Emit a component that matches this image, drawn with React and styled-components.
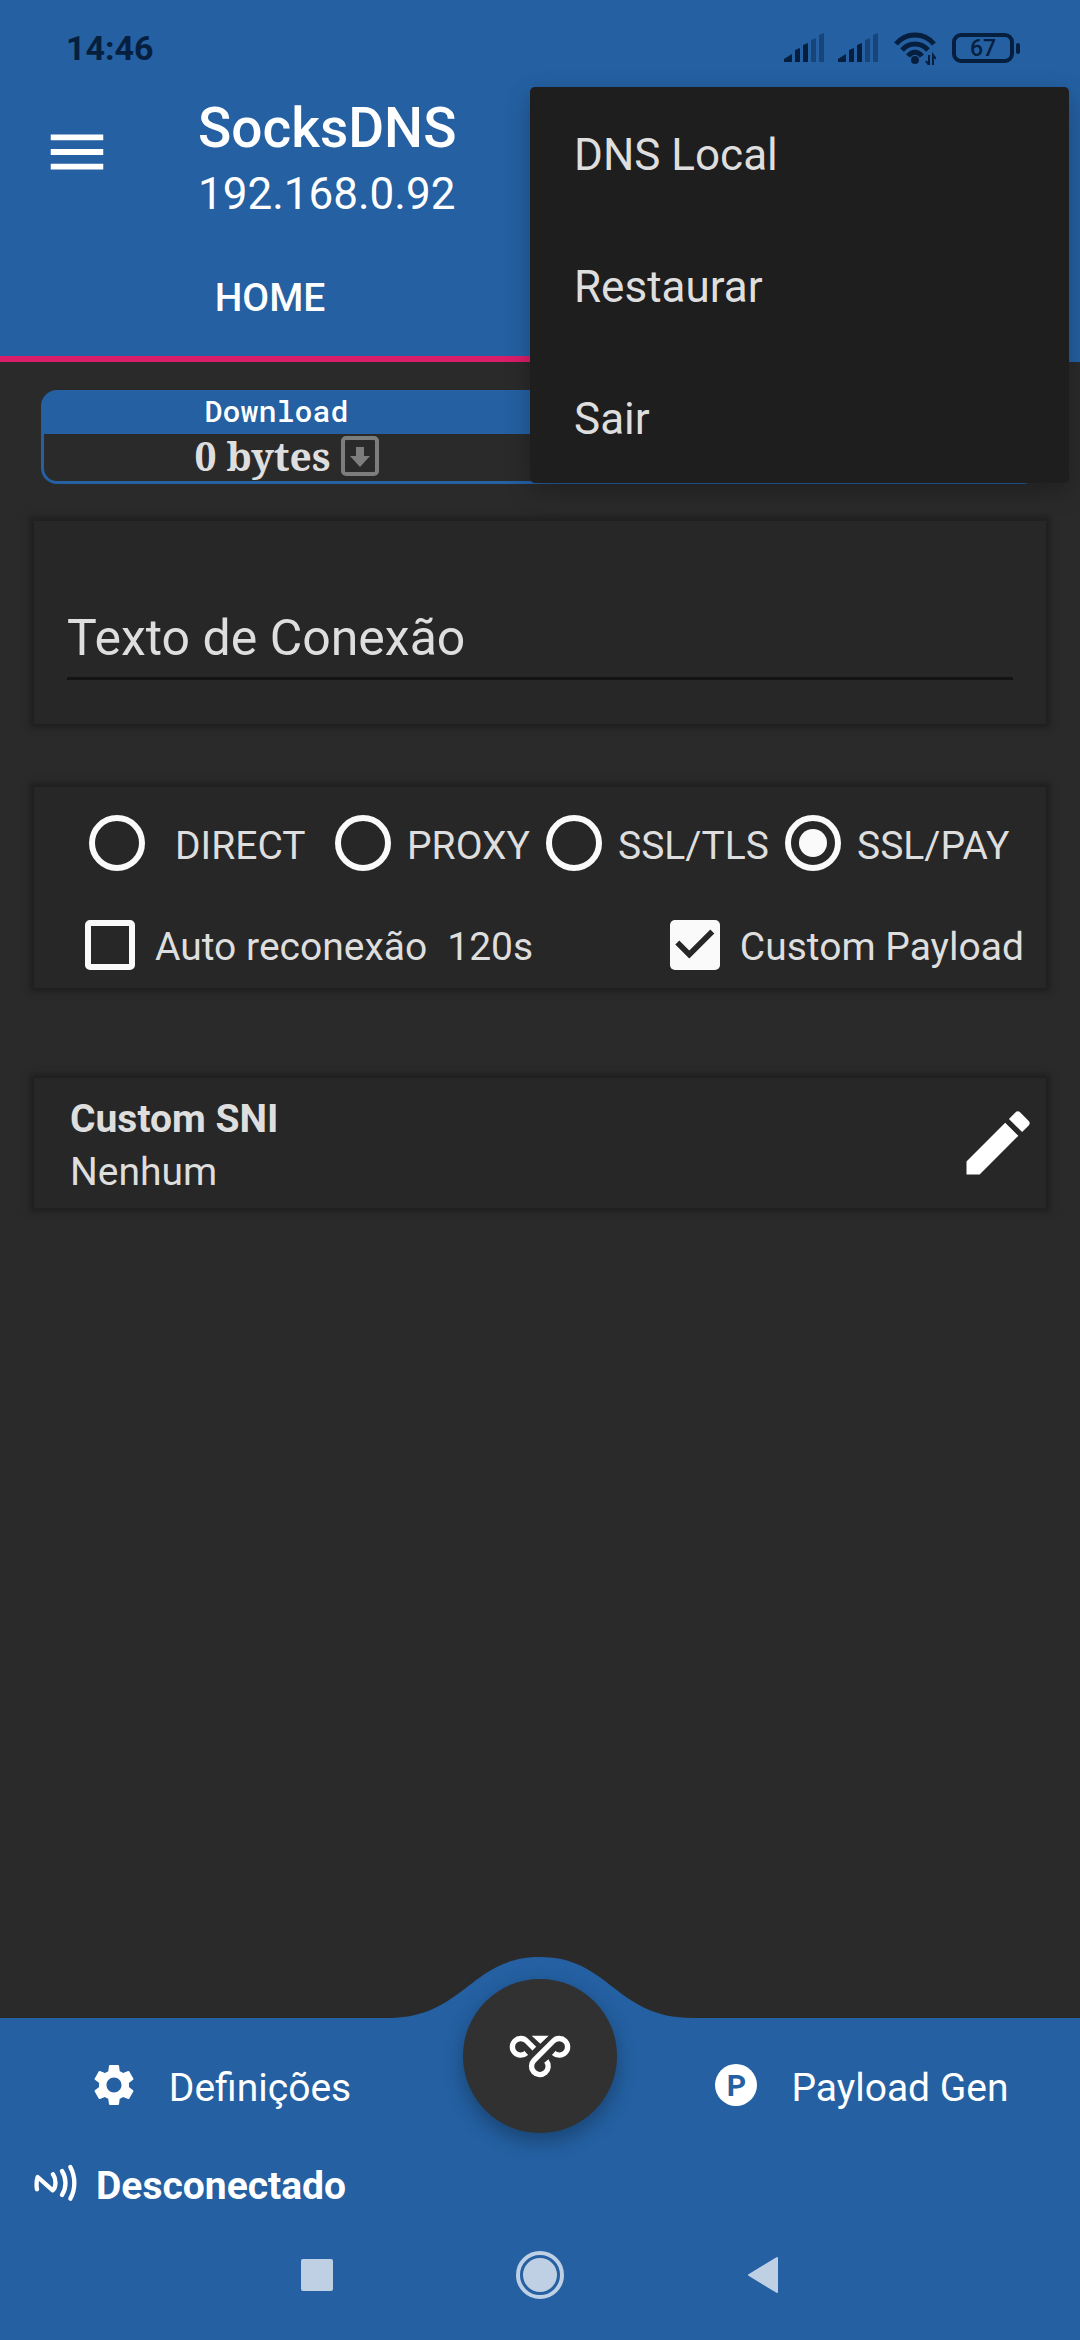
import React, { useState } from "react";
import styled, { createGlobalStyle } from "styled-components";
import { MdEdit, MdMenu, MdSettings } from "react-icons/md";

const GlobalStyle = createGlobalStyle`
  * {
    box-sizing: border-box;
  }
  body {
    margin: 0;
    background-color: #2a2a2a;
    font-family: Roboto, "Liberation Sans", sans-serif;
    font-size: 39px;
    color: #dedede;
  }
  button, input {
    font: inherit;
    color: inherit;
    margin: 0;
    padding: 0;
    border: none;
    background: none;
  }
`;

const Screen = styled.div`
  position: relative;
  min-height: 100vh;
  display: flex;
  flex-direction: column;
`;

// header
const Header = styled.header`
  background-color: #2460a2;
  color: #ffffff;
`;
const StatusBar = styled.div`
  height: 87px;
  padding: 9px 60px 0 66px;
  display: flex;
  align-items: center;
  justify-content: space-between;
  color: #061f3f;
`;
const Clock = styled.span`
  font-size: 34px;
  font-weight: 700;
`;
const StatusIcons = styled.div`
  display: flex;
  align-items: center;
  gap: 14px;
`;
const Battery = styled.div`
  width: 62px;
  height: 30px;
  margin: 0 6px 0 2px;
  display: flex;
  align-items: center;
  justify-content: center;
  border: 4px solid #061f3f;
  border-radius: 9px;
  font-size: 23px;
  font-weight: 500;
  position: relative;

  &::after {
    content: "";
    position: absolute;
    right: -10px;
    width: 4px;
    height: 11px;
    border-radius: 2px;
    background-color: #061f3f;
  }
`;
const Toolbar = styled.div`
  height: 145px;
  padding-left: 42px;
  display: flex;
  align-items: flex-start;
`;
const MenuButton = styled.button`
  width: 156px;
  height: 130px;
  display: flex;
  align-items: center;
`;
const Title = styled.h1`
  margin: 8px 0 0;
  font-size: 55px;
  line-height: 66px;
  font-weight: 500;
`;
const Subtitle = styled.div`
  font-size: 44px;
  line-height: 66px;
`;
const Tabs = styled.div`
  display: grid;
  grid-template-columns: 1fr 1fr;
`;
const Tab = styled.button`
  height: 130px;
  padding-top: 8px;
  font-weight: 500;
  border-bottom: 6px solid #d91d69;
`;

// overflow menu
const Menu = styled.div`
  position: absolute;
  top: 87px;
  right: 11px;
  width: calc(50% - 1px);
  border-radius: 5px;
  background-color: #1e1e1e;
  box-shadow: 0 8px 24px rgba(0, 0, 0, 0.25);
  z-index: 2;
`;
const MenuItem = styled.button`
  display: block;
  width: 100%;
  height: 132px;
  padding: 4px 0 0 44px;
  text-align: left;
  font-size: 44px;
`;

// content
const Main = styled.main`
  flex: 1;
  padding: 28px 34px 0;
`;
const Traffic = styled.section`
  height: 94px;
  margin: 0 7px;
  border: 3px solid #2460a2;
  border-top-width: 0;
  border-radius: 16px;
`;
const TrafficHead = styled.div`
  height: 44px;
  padding-bottom: 4px;
  display: grid;
  grid-template-columns: 465fr 527fr;
  align-items: center;
  text-align: center;
  border-radius: 13px 13px 0 0;
  background-color: #2460a2;
  color: #ffffff;
  font-family: "Roboto Mono", "Noto Sans Mono", "DejaVu Sans Mono", monospace;
  font-size: 30px;
  font-weight: 500;
`;
const TrafficBody = styled.div`
  height: 47px;
  display: grid;
  grid-template-columns: 465fr 527fr;
`;
const TrafficValue = styled.div`
  height: 47px;
  padding: 0 0 4px 20px;
  display: flex;
  align-items: center;
  justify-content: center;
  gap: 10px;
  font-family: "Noto Serif", "DejaVu Serif Condensed", "DejaVu Serif", serif;
  font-weight: 700;
  line-height: 44px;
`;
const Card = styled.section`
  margin-top: ${(props) => props.$top}px;
  background-color: #272727;
  box-shadow: 0 0 6px 4px #1f1f1f;
`;
const ConnectionCard = styled(Card)`
  padding: 77px 33px 44px;
`;
const ConnectionInput = styled.input`
  display: block;
  width: 100%;
  height: 82px;
  font-size: 50px;
  border-bottom: 3px solid #141414;
  outline: none;

  &::placeholder {
    color: #dedede;
    opacity: 1;
  }
`;
const ModeCard = styled(Card)`
  padding: 28px 22px 18px 51px;
`;
const RadioRow = styled.div`
  display: grid;
  grid-template-columns: 246fr 211fr 239fr 226fr;
  padding: 0 13px 0 4px;
`;
const CheckRow = styled.div`
  margin-top: 48px;
  display: flex;
  justify-content: space-between;
`;
const Option = styled.label`
  display: flex;
  align-items: center;
  gap: ${(props) => props.$gap || 20}px;
  white-space: nowrap;
`;
const LabelText = styled.span`
  padding-top: 5px;
`;
const Radio = styled.input`
  appearance: none;
  width: 56px;
  height: 56px;
  display: grid;
  place-items: center;
  border: 6px solid #fafafa;
  border-radius: 50%;

  &:checked::after {
    content: "";
    width: 28px;
    height: 28px;
    border-radius: 50%;
    background-color: #fafafa;
  }
`;
const Check = styled.input`
  appearance: none;
  width: 50px;
  height: 50px;
  border: 6px solid #fafafa;
  border-radius: 5px;

  &:checked {
    border: none;
    background-color: #fafafa;
  }
  &:checked::after {
    content: "";
    display: block;
    height: 100%;
    background-color: #272727;
    clip-path: polygon(
      39% 78%,
      11% 50%,
      19% 42%,
      39% 62%,
      81% 20%,
      89% 28%
    );
  }
`;
const SniCard = styled(Card)`
  height: 130px;
  padding: 0 6px 0 36px;
  display: flex;
  align-items: center;
  justify-content: space-between;
`;
const SniText = styled.div`
  padding-top: 5px;
  line-height: 53px;
`;
const EditButton = styled.button`
  display: flex;
  color: #ffffff;
`;

// footer
const Footer = styled.footer`
  position: relative;
  background-color: #2460a2;
  color: #ffffff;
`;
const Bump = styled.svg`
  position: absolute;
  left: 50%;
  bottom: 100%;
  transform: translateX(-50%);
`;
const Fab = styled.button`
  position: absolute;
  top: -39px;
  left: 50%;
  transform: translateX(-50%);
  width: 154px;
  height: 154px;
  display: flex;
  align-items: center;
  justify-content: center;
  border-radius: 50%;
  background-color: #313131;
  box-shadow: 0 8px 20px rgba(0, 0, 0, 0.3);
`;
const Actions = styled.div`
  height: 134px;
  display: grid;
  grid-template-columns: 1fr 200px 1fr;
`;
const Action = styled.button`
  grid-column: ${(props) => props.$column};
  display: flex;
  align-items: center;
  justify-content: center;
  gap: 30px;
`;
const PBadge = styled.span`
  width: 42px;
  height: 42px;
  margin: 4px;
  display: flex;
  align-items: center;
  justify-content: center;
  border-radius: 50%;
  background-color: #ffffff;
  color: #2460a2;
  font-size: 30px;
  font-weight: 700;
`;
const ConnectionState = styled.div`
  height: 62px;
  padding-left: 34px;
  display: flex;
  align-items: center;
  gap: 18px;
  font-weight: 700;
`;
const NavBar = styled.nav`
  height: 126px;
  padding: 0 19% 4px;
  display: grid;
  grid-template-columns: 1fr 1fr 1fr;
`;
const NavButton = styled.button`
  display: flex;
  align-items: center;
  justify-content: center;
`;

const SignalIcon = () => (
  <svg width="40" height="30" viewBox="0 0 40 30" fill="#061f3f">
    <path d="M0 29v-3l8-5v8z" />
    <path d="M11 29V17l5-2v14z" />
    <path d="M19 29V12l5-2v19z" />
    <path d="M27 29V7l5-2v24zM35 29V2l5-2v29z" opacity="0.4" />
  </svg>
);

const WifiIcon = () => (
  <svg width="44" height="34" viewBox="-2 0 44 34" fill="none">
    <g stroke="#061f3f" strokeWidth="5">
      <path d="M2 13C12 1 30 1 40 13" />
      <path d="M8 19C15 11 27 11 34 19" />
      <path d="M14 25C18 20 24 20 28 25" />
    </g>
    <circle cx="21" cy="29" r="4" fill="#061f3f" />
    <path d="M35 24v10l-3-4M39 34V24l3 4" stroke="#061f3f" strokeWidth="2" />
  </svg>
);

const DownloadIcon = () => (
  <svg width="38" height="40" viewBox="0 0 38 40">
    <rect
      x="2"
      y="2"
      width="34"
      height="36"
      rx="3"
      fill="none"
      stroke="#7d7d7d"
      strokeWidth="4"
    />
    <path d="M15 11h8v9h6L19 31 9 20h6z" fill="#7d7d7d" />
  </svg>
);

const LoopIcon = () => (
  <svg width="62" height="43" viewBox="447 317 186 129" fill="none">
    <g stroke="#ffffff" strokeWidth="16">
      <path d="M499 371A25 25 0 1 1 500 335L523 358" />
      <path d="M581 371A25 25 0 1 0 580 335L522 393A25 25 0 1 0 559 395" />
    </g>
    <path d="M515 319h51l-25 24z" fill="#ffffff" />
  </svg>
);

const WaveIcon = () => (
  <svg
    width="44"
    height="38"
    viewBox="42 41 132 114"
    fill="none"
    stroke="#ffffff"
    strokeWidth="13"
    strokeLinecap="round"
    strokeLinejoin="round"
  >
    <path d="M51 117C49 105 49 92 53 80L98 120C108 112 110 88 99 72" />
    <path d="M126 62C140 84 140 112 126 134" />
    <path d="M151 50C167 80 167 116 151 145" />
  </svg>
);

const modes = ["DIRECT", "PROXY", "SSL/TLS", "SSL/PAY"];
const menuItems = ["DNS Local", "Restaurar", "Sair"];

const App = () => {
  const [mode, setMode] = useState("SSL/PAY");

  return (
    <Screen>
      <GlobalStyle />
      <Header>
        <StatusBar>
          <Clock>14:46</Clock>
          <StatusIcons>
            <SignalIcon />
            <SignalIcon />
            <WifiIcon />
            <Battery>67</Battery>
          </StatusIcons>
        </StatusBar>
        <Toolbar>
          <MenuButton aria-label="Menu">
            <MdMenu size={70} />
          </MenuButton>
          <div>
            <Title>SocksDNS</Title>
            <Subtitle>192.168.0.92</Subtitle>
          </div>
        </Toolbar>
        <Tabs>
          <Tab>HOME</Tab>
        </Tabs>
      </Header>

      <Menu>
        {menuItems.map((item) => (
          <MenuItem key={item}>{item}</MenuItem>
        ))}
      </Menu>

      <Main>
        <Traffic>
          <TrafficHead>
            <span>Download</span>
          </TrafficHead>
          <TrafficBody>
            <TrafficValue>
              0 bytes
              <DownloadIcon />
            </TrafficValue>
          </TrafficBody>
        </Traffic>

        <ConnectionCard $top={37}>
          <ConnectionInput
            type="text"
            placeholder="Texto de Conexão"
            aria-label="Texto de Conexão"
          />
        </ConnectionCard>

        <ModeCard $top={63}>
          <RadioRow>
            {modes.map((name, i) => (
              <Option key={name} $gap={i === 0 ? 30 : 16}>
                <Radio
                  type="radio"
                  name="mode"
                  checked={mode === name}
                  onChange={() => setMode(name)}
                />
                <LabelText>{name}</LabelText>
              </Option>
            ))}
          </RadioRow>
          <CheckRow>
            <Option>
              <Check type="checkbox" />
              <LabelText>Auto reconexão</LabelText>
              <LabelText>120s</LabelText>
            </Option>
            <Option>
              <Check type="checkbox" defaultChecked />
              <LabelText>Custom Payload</LabelText>
            </Option>
          </CheckRow>
        </ModeCard>

        <SniCard $top={90}>
          <SniText>
            <strong>Custom SNI</strong>
            <div>Nenhum</div>
          </SniText>
          <EditButton aria-label="Editar SNI">
            <MdEdit size={84} />
          </EditButton>
        </SniCard>
      </Main>

      <Footer>
        <Bump width="306" height="61" viewBox="0 0 306 61" fill="#2460a2">
          <path d="M0 61C78 61 83 0 153 0S228 61 306 61z" />
        </Bump>
        <Actions>
          <Action $column={1}>
            <MdSettings size={50} />
            <LabelText>Definições</LabelText>
          </Action>
          <Action $column={3}>
            <PBadge>P</PBadge>
            <LabelText>Payload Gen</LabelText>
          </Action>
        </Actions>
        <Fab aria-label="Conectar">
          <LoopIcon />
        </Fab>
        <ConnectionState>
          <WaveIcon />
          <LabelText>Desconectado</LabelText>
        </ConnectionState>
        <NavBar>
          <NavButton aria-label="Recentes">
            <svg width="32" height="32" fill="#bfd0e5">
              <rect width="32" height="32" rx="2" />
            </svg>
          </NavButton>
          <NavButton aria-label="Início">
            <svg width="50" height="50" viewBox="0 0 50 50" fill="#bfd0e5">
              <circle cx="25" cy="25" r="17" />
              <circle
                cx="25"
                cy="25"
                r="22"
                fill="none"
                stroke="#bfd0e5"
                strokeWidth="4"
              />
            </svg>
          </NavButton>
          <NavButton aria-label="Voltar">
            <svg width="32" height="38" viewBox="0 0 32 38" fill="#bfd0e5">
              <path
                d="M30 2v34L2 19z"
                stroke="#bfd0e5"
                strokeWidth="2"
                strokeLinejoin="round"
              />
            </svg>
          </NavButton>
        </NavBar>
      </Footer>
    </Screen>
  );
};

export default App;
